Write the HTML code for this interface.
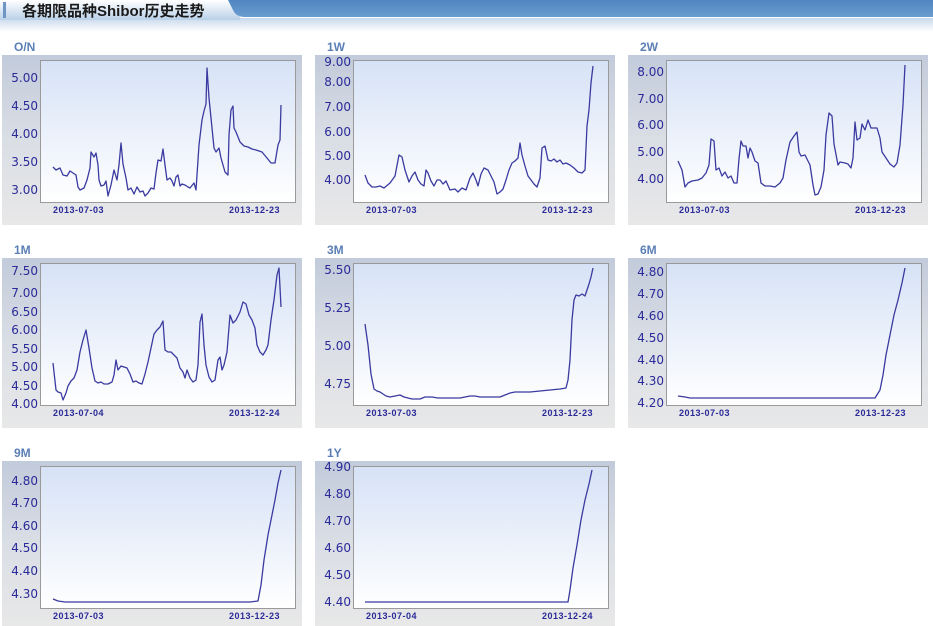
<!DOCTYPE html>
<html><head><meta charset="utf-8"><style>
html,body{margin:0;padding:0;background:#fff;width:933px;height:626px;overflow:hidden}
svg{display:block}
.t{font-family:"Liberation Sans","Noto Sans CJK SC",sans-serif}
.y{font:12px "DejaVu Sans",sans-serif;fill:#2a2a99;text-anchor:end}
.x{font:bold 9px "Liberation Sans",sans-serif;fill:#2a2a99;letter-spacing:0.5px}
.l{font:bold 12px "Liberation Sans",sans-serif;fill:#5b7fb5}
.ln{fill:none;stroke:#3a3aa0;stroke-width:1.3;stroke-linejoin:round}
</style></head><body>
<svg width="933" height="626" xmlns="http://www.w3.org/2000/svg">
<defs>
<linearGradient id="hd" x1="0" y1="0" x2="0" y2="1"><stop offset="0" stop-color="#ffffff"/><stop offset="1" stop-color="#b9d0e8"/></linearGradient>
<linearGradient id="bl" x1="0" y1="0" x2="0" y2="1"><stop offset="0" stop-color="#4f86c2"/><stop offset="1" stop-color="#6b9ccf"/></linearGradient>
<linearGradient id="fd" x1="0" y1="0" x2="0" y2="1"><stop offset="0" stop-color="#c8d9ec"/><stop offset="1" stop-color="#ffffff"/></linearGradient>
<linearGradient id="pn" x1="0" y1="0" x2="0" y2="1"><stop offset="0" stop-color="#c2cbdb"/><stop offset="0.5" stop-color="#dadee5"/><stop offset="1" stop-color="#e8e8e8"/></linearGradient>
<linearGradient id="pl" x1="0" y1="0" x2="0" y2="1"><stop offset="0" stop-color="#d6e2f6"/><stop offset="1" stop-color="#ffffff"/></linearGradient>
</defs>
<rect x="0" y="18" width="933" height="14" fill="url(#fd)"/>
<rect x="0" y="0" width="240" height="20" fill="url(#hd)"/>
<path d="M228,0 L933,0 L933,17 L245,17 Q236,17 233,10 Z" fill="url(#bl)"/>
<rect x="3" y="2" width="3" height="16" fill="#6f95c4"/>
<text x="22" y="16" class="t" style="font-size:15px;font-weight:bold;fill:#1a1a1a">各期限品种Shibor历史走势</text>

<rect x="2" y="55" width="300" height="170" fill="url(#pn)"/>
<rect x="40.5" y="60.5" width="255" height="142" fill="url(#pl)" stroke="#9a9a9a"/>
<rect x="315" y="55" width="300" height="170" fill="url(#pn)"/>
<rect x="353.5" y="60.5" width="255" height="142" fill="url(#pl)" stroke="#9a9a9a"/>
<rect x="628" y="55" width="300" height="170" fill="url(#pn)"/>
<rect x="666.5" y="60.5" width="255" height="142" fill="url(#pl)" stroke="#9a9a9a"/>
<rect x="2" y="258" width="300" height="170" fill="url(#pn)"/>
<rect x="40.5" y="263.5" width="255" height="142" fill="url(#pl)" stroke="#9a9a9a"/>
<rect x="315" y="258" width="300" height="170" fill="url(#pn)"/>
<rect x="353.5" y="263.5" width="255" height="142" fill="url(#pl)" stroke="#9a9a9a"/>
<rect x="628" y="258" width="300" height="170" fill="url(#pn)"/>
<rect x="666.5" y="263.5" width="255" height="142" fill="url(#pl)" stroke="#9a9a9a"/>
<rect x="2" y="461" width="300" height="165" fill="url(#pn)"/>
<rect x="40.5" y="466.5" width="255" height="142" fill="url(#pl)" stroke="#9a9a9a"/>
<rect x="315" y="461" width="300" height="165" fill="url(#pn)"/>
<rect x="353.5" y="466.5" width="255" height="142" fill="url(#pl)" stroke="#9a9a9a"/>

<text x="14" y="51" class="l">O/N</text>
<text x="327" y="51" class="l">1W</text>
<text x="640" y="51" class="l">2W</text>
<text x="14" y="254" class="l">1M</text>
<text x="327" y="254" class="l">3M</text>
<text x="640" y="254" class="l">6M</text>
<text x="14" y="457" class="l">9M</text>
<text x="327" y="457" class="l">1Y</text>

<text x="38" y="82" class="y">5.00</text><text x="38" y="110" class="y">4.50</text><text x="38" y="138" class="y">4.00</text><text x="38" y="166" class="y">3.50</text><text x="38" y="194" class="y">3.00</text>
<text x="351" y="66" class="y">9.00</text><text x="351" y="86" class="y">8.00</text><text x="351" y="111" class="y">7.00</text><text x="351" y="136" class="y">6.00</text><text x="351" y="160" class="y">5.00</text><text x="351" y="184" class="y">4.00</text>
<text x="664" y="76" class="y">8.00</text><text x="664" y="103" class="y">7.00</text><text x="664" y="129" class="y">6.00</text><text x="664" y="156" class="y">5.00</text><text x="664" y="183" class="y">4.00</text>
<text x="38" y="275" class="y">7.50</text><text x="38" y="297" class="y">7.00</text><text x="38" y="316" class="y">6.50</text><text x="38" y="334" class="y">6.00</text><text x="38" y="353" class="y">5.50</text><text x="38" y="371" class="y">5.00</text><text x="38" y="390" class="y">4.50</text><text x="38" y="408" class="y">4.00</text>
<text x="351" y="274" class="y">5.50</text><text x="351" y="312" class="y">5.25</text><text x="351" y="350" class="y">5.00</text><text x="351" y="388" class="y">4.75</text>
<text x="664" y="276" class="y">4.80</text><text x="664" y="298" class="y">4.70</text><text x="664" y="320" class="y">4.60</text><text x="664" y="342" class="y">4.50</text><text x="664" y="364" class="y">4.40</text><text x="664" y="385" class="y">4.30</text><text x="664" y="407" class="y">4.20</text>
<text x="38" y="485" class="y">4.80</text><text x="38" y="507" class="y">4.70</text><text x="38" y="530" class="y">4.60</text><text x="38" y="552" class="y">4.50</text><text x="38" y="575" class="y">4.40</text><text x="38" y="598" class="y">4.30</text>
<text x="351" y="471" class="y">4.90</text><text x="351" y="498" class="y">4.80</text><text x="351" y="525" class="y">4.70</text><text x="351" y="552" class="y">4.60</text><text x="351" y="579" class="y">4.50</text><text x="351" y="606" class="y">4.40</text>

<text x="53" y="213" class="x">2013-07-03</text><text x="229" y="213" class="x">2013-12-23</text>
<text x="366" y="213" class="x">2013-07-03</text><text x="542" y="213" class="x">2013-12-23</text>
<text x="679" y="213" class="x">2013-07-03</text><text x="855" y="213" class="x">2013-12-23</text>
<text x="53" y="416" class="x">2013-07-04</text><text x="229" y="416" class="x">2013-12-24</text>
<text x="366" y="416" class="x">2013-07-03</text><text x="542" y="416" class="x">2013-12-23</text>
<text x="679" y="416" class="x">2013-07-03</text><text x="855" y="416" class="x">2013-12-23</text>
<text x="53" y="619" class="x">2013-07-03</text><text x="229" y="619" class="x">2013-12-23</text>
<text x="366" y="619" class="x">2013-07-04</text><text x="542" y="619" class="x">2013-12-24</text>

<polyline class="ln" points="53,167 56,170 60,168 63,175 67,176 70,171 73,173 76,175 78,187 80,190 84,188 87,180 90,168 91,152 94,157 96,153 98,165 99,180 101,186 104,185 106,181 108,196 111,185 114,170 117,180 119,165 121,143 123,164 126,178 128,190 131,188 134,194 137,187 140,192 143,191 145,196 148,193 151,188 154,189 156,173 158,160 161,161 163,149 165,165 167,180 170,178 172,181 174,186 176,177 178,175 180,186 182,184 185,185 188,187 190,188 194,183 196,190 199,145 202,120 204,111 206,104 207,68 209,98 212,128 214,148 216,152 219,148 221,158 225,172 228,175 229,135 231,110 233,106 234,128 236,132 240,142 244,146 248,147 252,149 256,150 262,152 267,158 271,163 275,163 278,145 280,140 281,105"/>
<polyline class="ln" points="365,175 368,183 372,187 376,187 380,186 384,188 390,183 395,176 399,155 402,157 405,170 409,182 412,176 415,172 418,180 421,184 424,186 426,170 428,173 431,181 434,186 437,180 440,180 443,184 446,181 450,190 455,189 458,192 462,188 466,190 470,178 473,173 476,180 478,186 481,174 484,168 488,170 491,176 494,182 497,194 500,192 503,189 506,180 509,170 512,163 515,161 518,158 520,143 522,155 525,166 528,176 531,180 534,184 537,187 540,178 542,148 545,146 548,160 551,161 554,159 557,162 560,160 563,164 566,163 570,165 574,168 578,172 582,173 585,170 587,126 589,110 591,83 593,66"/>
<polyline class="ln" points="678,161 682,170 685,187 688,183 692,181 698,180 702,178 706,173 709,165 711,139 714,141 716,170 719,168 722,176 725,172 728,178 731,176 734,183 737,183 739,159 741,141 743,146 746,146 748,158 750,148 752,152 755,161 758,163 761,183 765,186 770,186 775,187 780,183 783,178 786,160 790,142 794,136 797,132 799,152 801,156 805,155 810,165 813,185 815,195 818,194 821,187 824,170 826,135 829,113 832,116 834,144 838,165 840,162 845,163 848,164 851,168 853,158 855,122 857,140 860,138 862,124 865,130 868,120 871,128 874,128 877,128 880,138 882,152 886,158 890,164 894,167 897,163 900,145 903,105 905,65"/>
<polyline class="ln" points="53,363 56,390 58,392 61,393 63,400 66,393 68,386 71,381 74,378 77,370 80,352 83,340 86,330 89,348 92,368 95,381 98,383 101,382 104,384 108,384 112,382 114,375 116,360 118,370 121,366 124,367 127,368 130,374 133,382 136,381 139,383 142,384 145,374 148,362 151,348 154,334 157,330 160,327 163,321 165,350 168,352 171,352 174,355 177,358 180,368 183,372 185,378 187,370 190,378 193,382 196,380 198,365 200,322 202,314 204,345 206,365 209,377 212,382 215,380 218,360 220,357 222,370 224,365 227,352 230,315 233,323 236,320 240,312 243,302 246,304 249,315 252,320 255,328 257,345 260,352 263,355 266,350 268,345 271,320 274,300 277,275 279,268 281,307"/>
<polyline class="ln" points="365,324 368,345 371,374 374,389 377,391 380,392 383,394 386,396 390,397 395,396 400,395 404,397 408,398 412,399 420,399 425,397 432,397 438,398 445,398 452,398 460,398 465,397 470,396 475,396 480,397 490,397 500,397 505,395 510,393 515,392 522,392 530,392 540,391 550,390 560,389 566,388 568,380 570,360 572,320 574,300 576,295 579,296 582,294 585,296 587,290 589,284 591,277 593,268"/>
<polyline class="ln" points="678,396 685,397 690,398 700,398 710,398 860,398 875,398 880,390 883,375 886,355 890,335 894,315 898,300 902,283 905,268"/>
<polyline class="ln" points="53,599 58,601 65,602 250,602 258,601 261,585 264,560 268,535 272,515 275,500 278,483 281,470"/>
<polyline class="ln" points="365,602 568,602 570,590 573,568 577,545 581,520 585,500 589,484 592,470"/>
</svg>
</body></html>
